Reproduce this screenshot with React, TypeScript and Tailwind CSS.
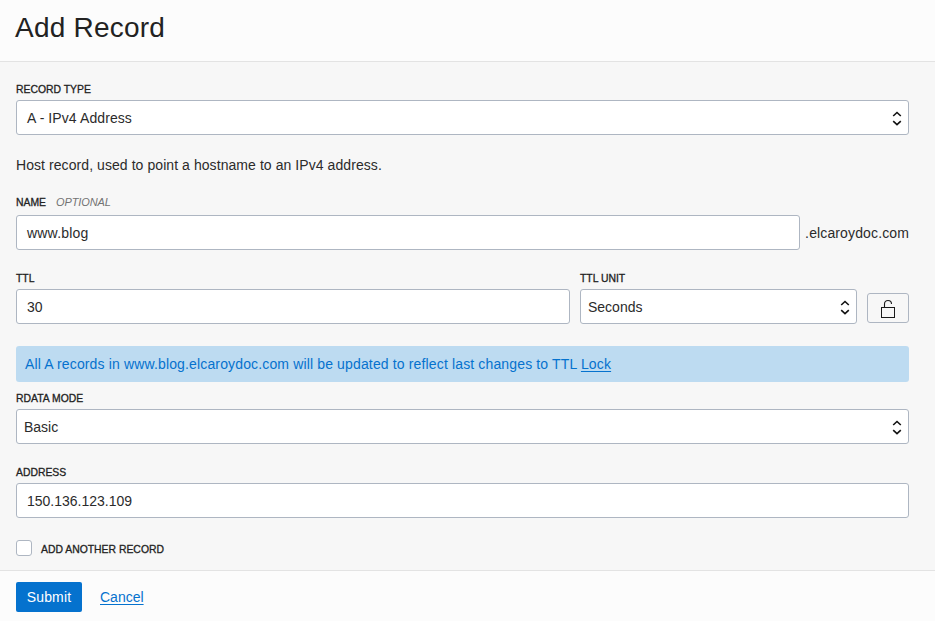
import type { ReactNode } from 'react';

const fieldBox =
  'flex h-[35px] items-center rounded-[3px] border border-[#aeb6c2] bg-white text-sm';

function Label({ children }: { children: ReactNode }) {
  return (
    <span className="block h-3 whitespace-nowrap text-[10.4px] leading-3 text-[#222] uppercase [-webkit-text-stroke:0.3px_#222]">
      {children}
    </span>
  );
}

function Chevrons() {
  return (
    <svg width="10" height="17" viewBox="0 0 10 17" fill="none" stroke="#111" strokeWidth="1.6">
      <path d="M1.2 7 L5 3.5 L8.8 7" />
      <path d="M1.2 12.2 L5 15.7 L8.8 12.2" />
    </svg>
  );
}

function UnlockIcon() {
  return (
    <svg width="16" height="20" viewBox="0 0 16 20" fill="none" stroke="#1a1a1a">
      <rect x="1.5" y="9.5" width="13" height="10" />
      <path d="M4.5 9.5 V6 C4.5 3.6 6.1 2.5 8 2.5 C10 2.5 11.5 3.8 11.5 6" strokeWidth="1.1" />
    </svg>
  );
}

export default function App() {
  return (
    <div className="flex h-[621px] w-[935px] flex-col bg-[#fcfcfc] font-['Liberation_Sans',Arial,sans-serif] text-sm text-[#2b2b2b]">
      {/* Header */}
      <header className="h-[62px] border-b border-[#e3e3e3] pt-[10px] pl-[15px]">
        <h1 className="text-[28px] leading-9 tracking-[0.22px] text-[#222]">Add Record</h1>
      </header>

      {/* Form */}
      <main className="h-[508px] bg-[#f7f7f7] pt-[22px] pr-[26px] pl-4">
        <Label>Record Type</Label>
        <div className={`${fieldBox} mt-1 justify-between pr-[6px] pl-[10px]`}>
          <span className="tracking-[0.09px]">A - IPv4 Address</span>
          <Chevrons />
        </div>

        <p className="mt-5 leading-5 tracking-[0.07px]">
          Host record, used to point a hostname to an IPv4 address.
        </p>

        <div className="mt-[22px] flex h-3 gap-[10px]">
          <Label>Name</Label>
          <span className="text-[11px] leading-[11px] tracking-[-0.1px] text-[#737373] italic">OPTIONAL</span>
        </div>
        <div className="mt-[6px] flex items-center justify-between">
          <div className={`${fieldBox} w-[784px] pl-[10px] tracking-[0.2px]`}>www.blog</div>
          <span className="tracking-[0.13px]">.elcaroydoc.com</span>
        </div>

        {/* TTL row */}
        <div className="mt-[23px] flex gap-[10px]">
          <div className="w-[554px]">
            <Label>TTL</Label>
            <div className={`${fieldBox} mt-1 pl-[10px]`}>30</div>
          </div>
          <div className="w-[277px]">
            <Label>TTL Unit</Label>
            <div className={`${fieldBox} mt-1 justify-between pr-[6px] pl-[7px]`}>
              <span>Seconds</span>
              <Chevrons />
            </div>
          </div>
          <button
            type="button"
            aria-label="Unlock"
            className="mt-5 flex h-[30px] w-[42px] items-center justify-center rounded-[3px] border border-[#aeb6c2] bg-[#f7f7f7]"
          >
            <UnlockIcon />
          </button>
        </div>

        <div className="mt-[22px] flex h-9 items-center rounded-[3px] bg-[#bddbf1] pl-[9px] text-[#0572ce]">
          <p className="tracking-[0.145px]">
            All A records in www.blog.elcaroydoc.com will be updated to reflect last changes to TTL{' '}
            <a href="#" className="underline underline-offset-2">Lock</a>
          </p>
        </div>

        <div className="mt-[11px]">
          <Label>RData Mode</Label>
        </div>
        <div className={`${fieldBox} mt-1 justify-between pr-[6px] pl-[7px]`}>
          <span>Basic</span>
          <Chevrons />
        </div>

        <div className="mt-[23px]">
          <Label>Address</Label>
        </div>
        <div className={`${fieldBox} mt-1 pl-[10px]`}>150.136.123.109</div>

        <label className="mt-[22px] flex h-4 gap-[9px]">
          <span className="size-4 rounded-[3px] border border-[#aeb6c2] bg-white" />
          <span className="pt-1">
            <Label>Add another record</Label>
          </span>
        </label>
      </main>

      {/* Footer */}
      <footer className="flex h-[51px] items-start gap-[18px] border-t border-[#e3e3e3] pt-[11px] pl-4">
        <button type="button" className="h-[30px] w-[66px] rounded-[2px] bg-[#0572ce] tracking-[0.15px] text-white">
          Submit
        </button>
        <a href="#" className="leading-[30px] text-[#0572ce] underline underline-offset-2">Cancel</a>
      </footer>
    </div>
  );
}
